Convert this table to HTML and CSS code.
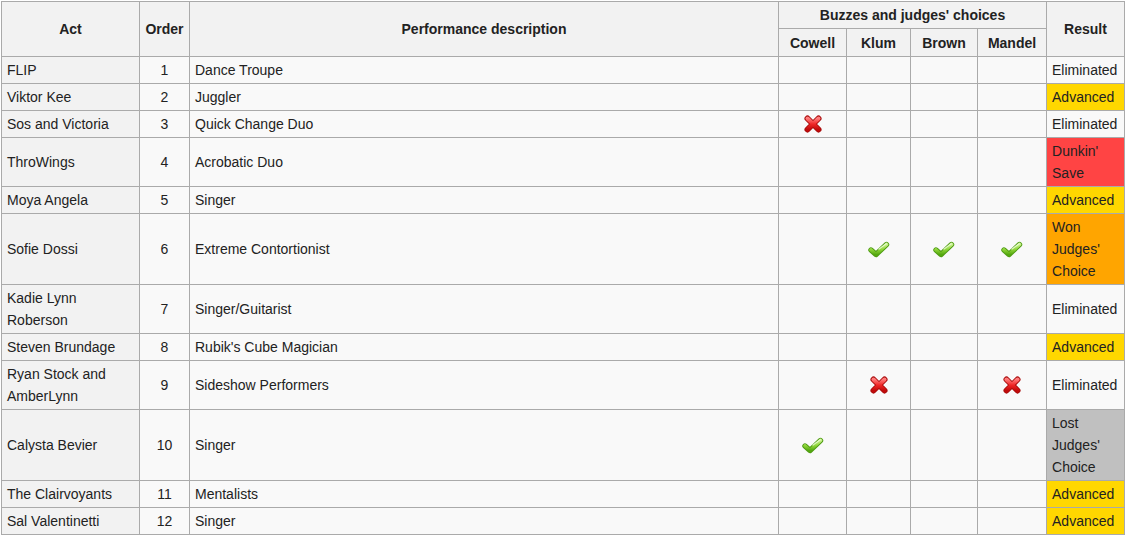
FILE: index.html
```html
<!DOCTYPE html>
<html>
<head>
<meta charset="utf-8">
<link rel="stylesheet" href="styles.css">
</head>
<body>
<svg width="0" height="0" class="defs">
  <defs>
    <linearGradient id="rg" x1="0" y1="0" x2="0" y2="1">
      <stop offset="0" stop-color="#ff7a7a"/>
      <stop offset="0.5" stop-color="#f02828"/>
      <stop offset="1" stop-color="#c20a0a"/>
    </linearGradient>
    <linearGradient id="gg" x1="0" y1="0" x2="0" y2="1">
      <stop offset="0" stop-color="#c8f08a"/>
      <stop offset="0.5" stop-color="#8fd63a"/>
      <stop offset="1" stop-color="#55a810"/>
    </linearGradient>
    <symbol id="x" viewBox="0 0 20 20">
      <path d="M4.5 4.5 L15.5 15.5 M15.5 4.5 L4.5 15.5" stroke="#a80c0c" stroke-width="6" stroke-linecap="round" fill="none"/>
      <path d="M4.5 4.5 L15.5 15.5 M15.5 4.5 L4.5 15.5" stroke="url(#rg)" stroke-width="4" stroke-linecap="round" fill="none"/>
    </symbol>
    <symbol id="c" viewBox="0 0 22 18">
      <path d="M3 10 L8 14.5 L18.5 4.5" stroke="#4d9a12" stroke-width="5.4" stroke-linecap="round" stroke-linejoin="round" fill="none"/>
      <path d="M3 10 L8 14.5 L18.5 4.5" stroke="url(#gg)" stroke-width="3.6" stroke-linecap="round" stroke-linejoin="round" fill="none"/>
      <path d="M11 9 L18.3 3.8" stroke="#e8fcd0" stroke-width="1.4" stroke-linecap="round" fill="none" opacity="0.85"/>
    </symbol>
  </defs>
</svg>
<table class="wikitable">
  <colgroup>
    <col class="c-act"><col class="c-order"><col class="c-perf">
    <col class="c-cow"><col class="c-klum"><col class="c-brown"><col class="c-mandel">
    <col class="c-result">
  </colgroup>
  <thead>
    <tr>
      <th rowspan="2">Act</th>
      <th rowspan="2">Order</th>
      <th rowspan="2">Performance description</th>
      <th colspan="4" class="h1">Buzzes and judges' choices</th>
      <th rowspan="2">Result</th>
    </tr>
    <tr class="h2">
      <th>Cowell</th><th>Klum</th><th>Brown</th><th>Mandel</th>
    </tr>
  </thead>
  <tbody>
    <tr><th class="act">FLIP</th><td class="num">1</td><td>Dance Troupe</td><td></td><td></td><td></td><td></td><td>Eliminated</td></tr>
    <tr><th class="act">Viktor Kee</th><td class="num">2</td><td>Juggler</td><td></td><td></td><td></td><td></td><td class="adv">Advanced</td></tr>
    <tr><th class="act">Sos and Victoria</th><td class="num">3</td><td>Quick Change Duo</td><td class="ic"><svg class="ix"><use href="#x"/></svg></td><td></td><td></td><td></td><td>Eliminated</td></tr>
    <tr><th class="act">ThroWings</th><td class="num">4</td><td>Acrobatic Duo</td><td></td><td></td><td></td><td></td><td class="save">Dunkin' Save</td></tr>
    <tr><th class="act">Moya Angela</th><td class="num">5</td><td>Singer</td><td></td><td></td><td></td><td></td><td class="adv">Advanced</td></tr>
    <tr><th class="act">Sofie Dossi</th><td class="num">6</td><td>Extreme Contortionist</td><td></td><td class="ic"><svg class="ic-c"><use href="#c"/></svg></td><td class="ic"><svg class="ic-c"><use href="#c"/></svg></td><td class="ic"><svg class="ic-c"><use href="#c"/></svg></td><td class="won">Won Judges' Choice</td></tr>
    <tr><th class="act">Kadie Lynn Roberson</th><td class="num">7</td><td>Singer/Guitarist</td><td></td><td></td><td></td><td></td><td>Eliminated</td></tr>
    <tr><th class="act">Steven Brundage</th><td class="num">8</td><td>Rubik's Cube Magician</td><td></td><td></td><td></td><td></td><td class="adv">Advanced</td></tr>
    <tr><th class="act">Ryan Stock and AmberLynn</th><td class="num">9</td><td>Sideshow Performers</td><td></td><td class="ic"><svg class="ix"><use href="#x"/></svg></td><td></td><td class="ic"><svg class="ix"><use href="#x"/></svg></td><td>Eliminated</td></tr>
    <tr><th class="act">Calysta Bevier</th><td class="num">10</td><td>Singer</td><td class="ic"><svg class="ic-c"><use href="#c"/></svg></td><td></td><td></td><td></td><td class="lost">Lost Judges' Choice</td></tr>
    <tr><th class="act">The Clairvoyants</th><td class="num">11</td><td>Mentalists</td><td></td><td></td><td></td><td></td><td class="adv">Advanced</td></tr>
    <tr><th class="act">Sal Valentinetti</th><td class="num">12</td><td>Singer</td><td></td><td></td><td></td><td></td><td class="adv">Advanced</td></tr>
  </tbody>
</table>
</body>
</html>
```

FILE: styles.css
```css
html, body {
  margin: 0;
  padding: 0;
  background: #ffffff;
}
body {
  font-family: "Liberation Sans", Arial, sans-serif;
  font-size: 14px;
  color: #222222;
}
.defs {
  position: absolute;
  width: 0;
  height: 0;
}
.wikitable {
  margin: 1px 0 0 1px;
  width: 1124px;
  table-layout: fixed;
  border-collapse: collapse;
  background: #f9f9f9;
  border: 1px solid #aaaaaa;
  line-height: 22px;
}
.c-act { width: 138px; }
.c-order { width: 50px; }
.c-perf { width: 589px; }
.c-cow { width: 68px; }
.c-klum { width: 64px; }
.c-brown { width: 67px; }
.c-mandel { width: 69px; }
.c-result { width: 78px; }

.wikitable th,
.wikitable td {
  border: 1px solid #aaaaaa;
  padding: 2px 5px;
  vertical-align: middle;
}
.wikitable thead th {
  background: #f2f2f2;
  font-weight: bold;
  text-align: center;
}
.wikitable .h1 {
  padding-top: 2px;
  padding-bottom: 2px;
}
.wikitable .h2 th {
  padding-top: 3px;
  padding-bottom: 2px;
}
.wikitable th.act {
  background: #f2f2f2;
  font-weight: normal;
  text-align: left;
}
.wikitable td.num {
  text-align: center;
}
.wikitable td.ic {
  text-align: center;
  line-height: 0;
}
.ix {
  width: 20px;
  height: 20px;
  vertical-align: middle;
}
.ic-c {
  width: 22px;
  height: 18px;
  vertical-align: middle;
}
.adv { background: #ffd700; }
.save { background: #ff4444; }
.won { background: #ffa500; }
.lost { background: #c0c0c0; }
```
